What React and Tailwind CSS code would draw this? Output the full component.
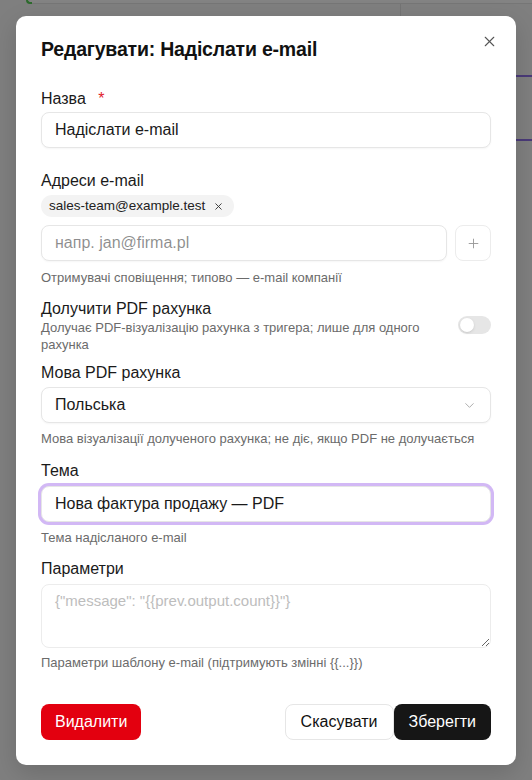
import React from "react";
import { X, Plus, ChevronDown } from "lucide-react";

const font = { fontFamily: '"Liberation Sans", Arial, sans-serif' };

const Help = ({ children, className = "" }) => (
  <p className={`text-[13px] leading-5 text-[#6b6b6b] ${className}`}>{children}</p>
);

const Label = ({ children, className = "" }) => (
  <label className={`block text-[16px] leading-5 text-[#1a1a1a] ${className}`}>{children}</label>
);

const inputBase =
  "w-full h-9 rounded-lg border border-[#e6e6e6] bg-white px-[13px] text-[16px] text-[#1a1a1a] shadow-[0_1px_2px_rgba(0,0,0,0.04)] outline-none";

export default function App() {
  return (
    <div className="relative min-h-screen w-full overflow-hidden bg-[#7f7f7f]" style={font}>
      {/* dimmed page behind the dialog */}
      <div className="absolute left-[30px] right-0 top-0 h-[4px] border-b border-[#767676] bg-[#838383]" />
      <div className="absolute left-[26px] top-0 h-[4px] w-[6px] rounded-bl-full border-b-2 border-l-2 border-[#2d6b2d]" />
      <div className="absolute left-[400px] top-[4px] h-[16px] w-px bg-[#747474]" />
      <div className="absolute right-0 top-[75px] h-[2px] w-[16px] bg-[#4a3a78]" />
      <div className="absolute right-0 top-[139px] h-[2px] w-[16px] bg-[#4a3a78]" />

      {/* dialog */}
      <div className="relative ml-4 mt-4 w-[500px] rounded-[10px] bg-white px-[25px] pb-[25px] pt-[19px] shadow-[0_8px_24px_rgba(0,0,0,0.15)]">
        <button className="absolute right-[18px] top-[17px] text-[#555]">
          <X size={17} strokeWidth={1.5} />
        </button>

        <h2 className="text-[19.5px] font-bold leading-7 tracking-[-0.2px] text-[#111]">
          Редагувати: Надіслати e-mail
        </h2>

        {/* Назва */}
        <Label className="mt-[26px]">
          Назва <span className="ml-2 text-[#e0202a]">*</span>
        </Label>
        <input className={`${inputBase} mt-[3px]`} defaultValue="Надіслати e-mail" />

        {/* Адреси */}
        <Label className="mt-[23px]">Адреси e-mail</Label>
        <div className="mt-[4px] flex">
          <span className="inline-flex h-[22px] items-center gap-2 rounded-full bg-[#f3f3f3] pl-2 pr-[10px] text-[13.5px] text-[#222]">
            sales-team@example.test
            <X size={11} strokeWidth={2} className="text-[#333]" />
          </span>
        </div>
        <div className="mt-[8px] flex gap-2">
          <input className={inputBase} placeholder="напр. jan@firma.pl" />
          <button className="flex h-9 w-9 shrink-0 items-center justify-center rounded-lg border border-[#ececec] bg-white text-[#9a9a9a]">
            <Plus size={15} strokeWidth={1.5} />
          </button>
        </div>
        <Help className="mt-[7px]">Отримувачі сповіщення; типово — e-mail компанії</Help>

        {/* PDF toggle */}
        <div className="mt-[11px] flex items-center gap-4">
          <div className="flex-1">
            <Label>Долучити PDF рахунка</Label>
            <p className="text-[13px] leading-[17px] text-[#6b6b6b]">
              Долучає PDF-візуалізацію рахунка з тригера; лише для одного рахунка
            </p>
          </div>
          <div className="mb-[2px] flex h-[18px] w-[33px] shrink-0 items-center rounded-full bg-[#e6e6e6] p-[2px]">
            <div className="h-[14px] w-[14px] rounded-full bg-white shadow-sm" />
          </div>
        </div>

        {/* Мова */}
        <Label className="mt-[10px]">Мова PDF рахунка</Label>
        <div className={`${inputBase} mt-[4px] flex items-center justify-between`}>
          <span>Польська</span>
          <ChevronDown size={15} strokeWidth={1.5} className="text-[#a8a8a8]" />
        </div>
        <Help className="mt-[6px]">Мова візуалізації долученого рахунка; не діє, якщо PDF не долучається</Help>

        {/* Тема */}
        <Label className="mt-[12px]">Тема</Label>
        <input
          className={`${inputBase} mt-[5px] border-[1.5px] border-[#9563dc] ring-[3px] ring-[#d2b8f5]`}
          defaultValue="Нова фактура продажу — PDF"
        />
        <Help className="mt-[6px]">Тема надісланого e-mail</Help>

        {/* Параметри */}
        <Label className="mt-[11px]">Параметри</Label>
        <textarea
          className="mt-[5px] block h-[64px] w-full resize-y rounded-lg border border-[#ececec] bg-white px-[13px] py-[6px] text-[15px] leading-5 text-[#1a1a1a] outline-none placeholder:text-[#bdbdbd]"
          placeholder={'{"message": "{{prev.output.count}}"}'}
        />
        <Help className="mt-[5px]">Параметри шаблону e-mail (підтримують змінні {"{{...}}"})</Help>

        {/* actions */}
        <div className="mt-[31px] flex items-center">
          <button className="h-9 rounded-lg bg-[#e3000f] px-[14px] text-[16px] text-white">Видалити</button>
          <div className="ml-auto flex">
            <button className="h-9 rounded-lg border border-[#e6e6e6] bg-white px-[15px] text-[16px] text-[#111]">
              Скасувати
            </button>
            <button className="h-9 rounded-lg bg-[#161616] px-[15px] text-[16px] text-white">Зберегти</button>
          </div>
        </div>
      </div>
    </div>
  );
}
